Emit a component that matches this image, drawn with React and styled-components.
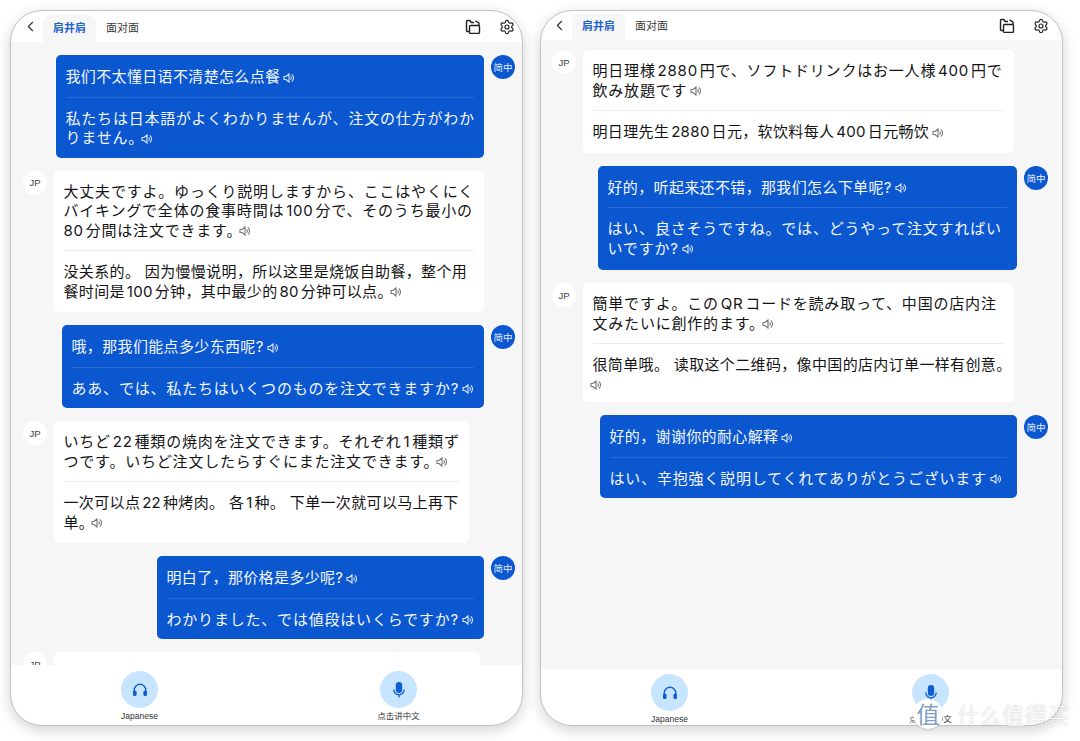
import React from "react";
import styled, { createGlobalStyle } from "styled-components";
import { ChevronLeft, Settings } from "lucide-react";

const Global = createGlobalStyle`
  html, body {
    margin: 0;
    padding: 0;
    background: #fff;
  }
  body {
    font-family: Inter, "Noto Sans CJK JP", "Noto Sans CJK SC", sans-serif;
    text-autospace: normal;
  }
`;

const Page = styled.div`
  position: relative;
  width: 1080px;
  height: 741px;
  overflow: hidden;
  display: flex;
  gap: 17px;
  padding: 10px 17px 15px 10px;
  box-sizing: border-box;
`;

const Phone = styled.div`
  flex: 0 0 ${(p) => p.$width}px;
  display: flex;
  flex-direction: column;
  box-sizing: border-box;
  background: #fff;
  border: 1px solid #c2c2c2;
  border-radius: 32px;
  box-shadow: 0 4px 14px rgba(0, 0, 0, 0.18);
  overflow: hidden;
`;

const Header = styled.div`
  flex: 0 0 ${(p) => p.$height}px;
  display: flex;
  align-items: flex-end;
  padding: 0 ${(p) => p.$right}px 0 ${(p) => p.$left}px;
  color: #333;
`;

const Back = styled.div`
  width: 23px;
  height: 100%;
  padding-right: 3px;
  box-sizing: border-box;
  display: flex;
  align-items: center;
  justify-content: center;
`;

const Tab = styled.div`
  width: 53px;
  height: 27px;
  padding-bottom: 2px;
  box-sizing: border-box;
  display: flex;
  align-items: center;
  justify-content: center;
  border-radius: 8px 8px 0 0;
  font-size: 11px;
  line-height: 1;
  font-weight: ${(p) => (p.$active ? 700 : 400)};
  color: ${(p) => (p.$active ? "#1f63cf" : "#3a3a3a")};
  background: ${(p) => (p.$active ? "#f6f6f6" : "transparent")};
  font-family: "Noto Sans CJK SC", sans-serif;
`;

const HeaderIcons = styled.div`
  margin-left: auto;
  height: 100%;
  display: flex;
  align-items: center;
  gap: 18px;
`;

const Body = styled.div`
  flex: 1;
  min-height: 0;
  overflow: hidden;
  background: #f6f6f6;
  display: flex;
  flex-direction: column;
  gap: 13px;
  padding: ${(p) => p.$top}px ${(p) => p.$right}px 0 ${(p) => p.$left}px;
`;

const Row = styled.div`
  flex: none;
  display: flex;
  gap: 7px;
  align-items: flex-start;
  justify-content: ${(p) => (p.$self ? "flex-end" : "flex-start")};
`;

const Avatar = styled.div`
  flex: none;
  width: 24px;
  height: 24px;
  border-radius: 50%;
  display: flex;
  align-items: center;
  justify-content: center;
  font-size: 9.5px;
  font-family: ${(p) => (p.$self ? '"Noto Sans CJK SC"' : '"Liberation Sans"')}, sans-serif;
  background: ${(p) => (p.$self ? "#0b57cf" : "#fff")};
  color: ${(p) => (p.$self ? "#e8f0ff" : "#3c3c3c")};
`;

const Bubble = styled.div`
  flex: none;
  box-sizing: border-box;
  width: ${(p) => p.$width}px;
  min-height: ${(p) => (p.$blank ? 60 : 0)}px;
  padding: ${(p) => (p.$self ? 12 : 11)}px 2px ${(p) => p.$bottom ?? (p.$self ? 10 : 11)}px 9.5px;
  border-radius: 5px;
  font-size: 15px;
  line-height: 19.5px;
  background: ${(p) => (p.$self ? "#0b57cf" : "#fff")};
  color: ${(p) => (p.$self ? "#f4f7ff" : "#141414")};
`;

const Line = styled.div`
  letter-spacing: ${(p) => (p.$ja ? 0.8 : 0.35)}px;
  font-family: Inter, ${(p) => (p.$ja ? '"Noto Sans CJK JP"' : '"Noto Sans CJK SC"')}, sans-serif;
`;

const Divider = styled.div`
  height: 1px;
  margin: 10px 8px 11px 0;
  background: ${(p) => (p.$self ? "#2a6ad6" : "#ececec")};
`;

const Speaker = styled.svg`
  display: inline-block;
  width: 12px;
  height: 12px;
  margin-left: ${(p) => (p.$afterStop ? -3 : 3)}px;
  vertical-align: -1.5px;
  color: ${(p) => (p.$self ? "#dbe6fa" : "#767676")};
`;

const Footer = styled.div`
  flex: 0 0 ${(p) => p.$height}px;
  display: flex;
  gap: ${(p) => p.$gap}px;
  padding: ${(p) => p.$top}px 0 0 98.5px;
  box-sizing: border-box;
`;

const Control = styled.div`
  width: 60px;
  display: flex;
  flex-direction: column;
  align-items: center;
  gap: 3px;
`;

const Round = styled.div`
  width: 37px;
  height: 37px;
  border-radius: 50%;
  background: #c7e5fe;
  display: flex;
  align-items: center;
  justify-content: center;
`;

const Label = styled.div`
  font-size: 8.5px;
  line-height: 11px;
  white-space: nowrap;
  color: #333;
  font-family: "Liberation Sans", "Noto Sans CJK SC", sans-serif;
`;

const MarkCircle = styled.div`
  position: absolute;
  left: 913px;
  top: 699px;
  width: 30px;
  height: 30px;
  border-radius: 50%;
  background: #fff;
  color: #7f9fc4;
  font-size: 23px;
  line-height: 29px;
  text-align: center;
  font-family: "Noto Sans CJK SC", sans-serif;
  box-shadow: 0 1px 2px rgba(0, 0, 0, 0.12);
`;

const MarkText = styled.div`
  position: absolute;
  left: 957px;
  top: 698px;
  font-size: 22.5px;
  line-height: 32px;
  font-weight: 300;
  color: rgba(255, 255, 255, 0.92);
  text-shadow: 0 0 2px rgba(0, 0, 0, 0.28);
  font-family: "Noto Sans CJK SC", sans-serif;
`;

const SpeakerIcon = ({ self, afterStop }) => (
  <Speaker $self={self} $afterStop={afterStop} viewBox="0 0 12 12" fill="none" stroke="currentColor" strokeWidth="1.1">
    <path d="M1 4.5h2L6 2v8L3 7.5H1z" />
    <path d="M7.6 4.3a2.3 2.3 0 0 1 0 3.4" />
    <path d="M8.8 2.4a4.6 4.6 0 0 1 0 7.2" />
  </Speaker>
);

const FolderIcon = () => (
  <svg width="16" height="16" viewBox="0 0 16 16" fill="none" stroke="#222" strokeWidth="1.4" strokeLinejoin="round">
    <path d="M4 12.5H2.6A1.1 1.1 0 0 1 1.5 11.4V2.6A1.1 1.1 0 0 1 2.6 1.5h2.2l1.4 2H9" />
    <path d="M4.5 7.5V13.4a1 1 0 0 0 1 1h8a1 1 0 0 0 1-1V7.5a1 1 0 0 0-1-1h-8a1 1 0 0 0-1 1z" />
    <path d="M10.5 1.8l3.5 2.2v2.4" />
  </svg>
);

const HeadphoneIcon = () => (
  <svg width="16" height="16" viewBox="0 0 16 16" fill="#0f5fd3">
    <path d="M2.2 9.5V8a5.8 5.8 0 0 1 11.6 0v1.5" fill="none" stroke="#0f5fd3" strokeWidth="1.4" />
    <rect x="1" y="8.6" width="3.6" height="5.4" rx="1.6" />
    <rect x="11.4" y="8.6" width="3.6" height="5.4" rx="1.6" />
  </svg>
);

const MicIcon = () => (
  <svg width="16" height="18" viewBox="0 0 16 18" fill="#0f5fd3">
    <rect x="4.8" y="1" width="6.4" height="11" rx="3.2" />
    <path d="M2.8 8.6a5.2 5.2 0 0 0 10.4 0M8 13.8V16.5" fill="none" stroke="#0f5fd3" strokeWidth="1.3" />
  </svg>
);

const leftMessages = [
  {
    self: true,
    width: 428,
    top: "我们不太懂日语不清楚怎么点餐",
    bottom: "私たちは日本語がよくわかりませんが、注文の仕方がわかりません。",
  },
  {
    width: 430,
    top: "大丈夫ですよ。ゆっくり説明しますから、ここはやくにくバイキングで全体の食事時間は100分で、そのうち最小の80分間は注文できます。",
    bottom: "没关系的。 因为慢慢说明，所以这里是烧饭自助餐，整个用餐时间是100分钟，其中最少的80分钟可以点。",
  },
  {
    self: true,
    width: 422,
    top: "哦，那我们能点多少东西呢?",
    bottom: "ああ、では、私たちはいくつのものを注文できますか?",
  },
  {
    width: 415,
    top: "いちど22種類の焼肉を注文できます。それぞれ1種類ずつです。いちど注文したらすぐにまた注文できます。",
    bottom: "一次可以点22种烤肉。 各1种。 下单一次就可以马上再下单。",
  },
  {
    self: true,
    width: 327,
    top: "明白了，那价格是多少呢?",
    bottom: "わかりました、では値段はいくらですか?",
  },
  { width: 426, blank: true },
];

const rightMessages = [
  {
    width: 431,
    top: "明日理様2880円で、ソフトドリンクはお一人様400円で飲み放題です",
    bottom: "明日理先生2880日元，软饮料每人400日元畅饮",
  },
  {
    self: true,
    width: 419,
    bottomPad: 12,
    top: "好的，听起来还不错，那我们怎么下单呢?",
    bottom: "はい、良さそうですね。では、どうやって注文すればいいですか?",
  },
  {
    width: 431,
    bottomPad: 8,
    top: "簡単ですよ。このQRコードを読み取って、中国の店内注文みたいに創作的ます。",
    bottom: "很简单哦。 读取这个二维码，像中国的店内订单一样有创意。",
  },
  {
    self: true,
    width: 417,
    top: "好的，谢谢你的耐心解释",
    bottom: "はい、辛抱強く説明してくれてありがとうございます",
  },
];

const hasKana = (text) => /[\u3040-\u30ff]/.test(text);

const Text = ({ self, children }) => (
  <Line $ja={hasKana(children)}>
    {children}
    <SpeakerIcon self={self} afterStop={children.endsWith("。")} />
  </Line>
);

const Message = ({ self, width, top, bottom, blank, bottomPad }) => (
  <Row $self={self}>
    {!self && <Avatar>JP</Avatar>}
    <Bubble $self={self} $width={width} $blank={blank} $bottom={bottomPad}>
      {!blank && (
        <>
          <Text self={self}>{top}</Text>
          <Divider $self={self} />
          <Text self={self}>{bottom}</Text>
        </>
      )}
    </Bubble>
    {self && <Avatar $self>简中</Avatar>}
  </Row>
);

const Screen = ({ width, messages, headerHeight, footerHeight, footerTop, footerGap, bodyTop, bodyLeft, bodyRight, tabLeft, iconsRight }) => (
  <Phone $width={width}>
    <Header $height={headerHeight} $left={tabLeft} $right={iconsRight}>
      <Back>
        <ChevronLeft size={17} strokeWidth={1.6} />
      </Back>
      <Tab $active>肩井肩</Tab>
      <Tab>面对面</Tab>
      <HeaderIcons>
        <FolderIcon />
        <Settings size={16} strokeWidth={1.8} color="#222" />
      </HeaderIcons>
    </Header>
    <Body $top={bodyTop} $left={bodyLeft} $right={bodyRight}>
      {messages.map((m, i) => (
        <Message key={i} {...m} />
      ))}
    </Body>
    <Footer $height={footerHeight} $top={footerTop} $gap={footerGap}>
      <Control>
        <Round>
          <HeadphoneIcon />
        </Round>
        <Label>Japanese</Label>
      </Control>
      <Control>
        <Round>
          <MicIcon />
        </Round>
        <Label>点击讲中文</Label>
      </Control>
    </Footer>
  </Phone>
);

export default function App() {
  return (
    <>
      <Global />
      <Page>
        <Screen
          width={513}
          messages={leftMessages}
          headerHeight={31}
          footerHeight={60}
          footerTop={6}
          footerGap={199}
          bodyTop={13}
          bodyLeft={12}
          bodyRight={7}
          tabLeft={9}
          iconsRight={7}
        />
        <Screen
          width={523}
          messages={rightMessages}
          headerHeight={29}
          footerHeight={55}
          footerTop={5}
          footerGap={201}
          bodyTop={10}
          bodyLeft={11}
          bodyRight={14}
          tabLeft={8}
          iconsRight={13}
        />
        <MarkCircle>值</MarkCircle>
        <MarkText>什么值得买</MarkText>
      </Page>
    </>
  );
}
